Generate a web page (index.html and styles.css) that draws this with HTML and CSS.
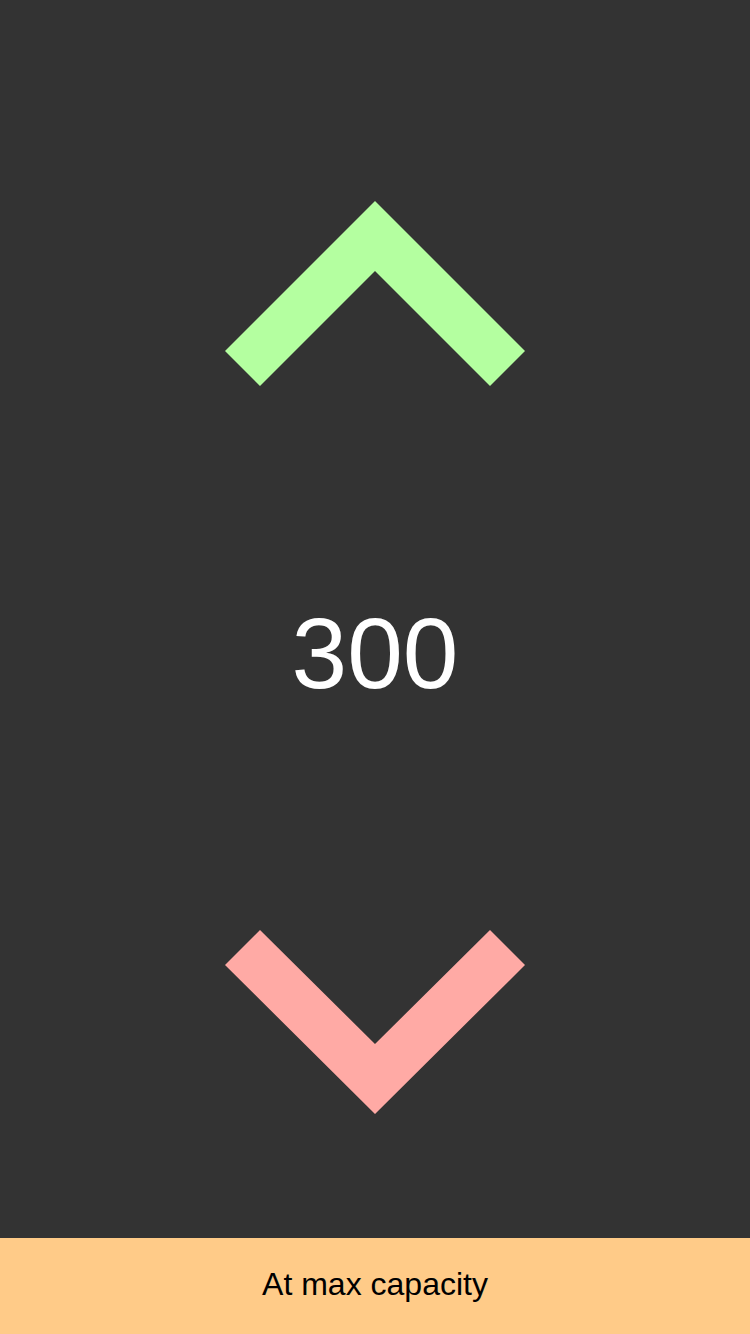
FILE: index.html
```html
<!DOCTYPE html>
<html>
<head>
<meta charset="utf-8">
<link rel="stylesheet" href="styles.css">
</head>
<body>
<div class="app">
  <main class="counter">
    <button class="arrow arrow-up" aria-label="Increase">
      <svg width="300" height="186" viewBox="0 0 300 186">
        <polygon points="150,0 300,150 265,185 150,70 35,185 0,150" fill="#b4ffa0"/>
      </svg>
    </button>
    <div class="count">300</div>
    <button class="arrow arrow-down" aria-label="Decrease">
      <svg width="300" height="186" viewBox="0 0 300 186">
        <polygon points="35,0 150,114 265,0 300,35 150,184 0,35" fill="#ffaaa5"/>
      </svg>
    </button>
  </main>
  <footer class="status">At max capacity</footer>
</div>
</body>
</html>
```

FILE: styles.css
```css
html, body {
  margin: 0;
  padding: 0;
  background: #333333;
}
.app {
  width: 750px;
  height: 1334px;
  display: flex;
  flex-direction: column;
  font-family: "Liberation Sans", Arial, sans-serif;
}
.counter {
  flex: 1;
  display: flex;
  flex-direction: column;
  align-items: center;
  padding-top: 201px;
  box-sizing: border-box;
}
.arrow {
  background: none;
  border: 0;
  padding: 0;
  margin: 0;
  width: 300px;
  height: 186px;
  display: block;
}
.arrow svg {
  display: block;
}
.count {
  color: #ffffff;
  font-size: 100px;
  line-height: 100px;
  margin-top: 216px;
  margin-bottom: 227px;
}
.status {
  height: 96px;
  box-sizing: border-box;
  padding-bottom: 4px;
  line-height: 92px;
  background: #ffcb88;
  color: #000000;
  font-size: 32px;
  text-align: center;
}
```
